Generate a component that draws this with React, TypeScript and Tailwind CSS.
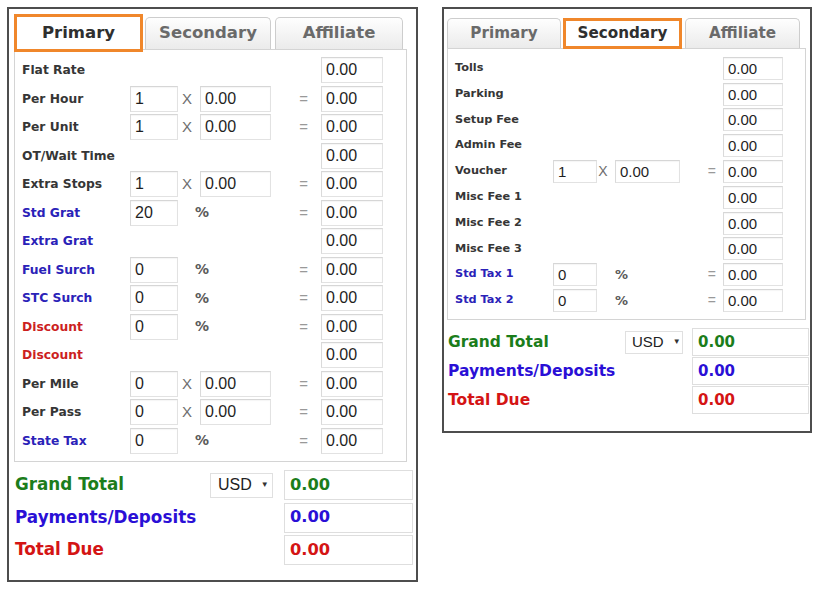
import React from "react";

type Kind = "single" | "mult" | "pct";
type Color = "dark" | "blue" | "red";
type Row = { label: string; kind: Kind; v?: string; color: Color };

const leftRows: Row[] = [
  { label: "Flat Rate", kind: "single", color: "dark" },
  { label: "Per Hour", kind: "mult", v: "1", color: "dark" },
  { label: "Per Unit", kind: "mult", v: "1", color: "dark" },
  { label: "OT/Wait Time", kind: "single", color: "dark" },
  { label: "Extra Stops", kind: "mult", v: "1", color: "dark" },
  { label: "Std Grat", kind: "pct", v: "20", color: "blue" },
  { label: "Extra Grat", kind: "single", color: "blue" },
  { label: "Fuel Surch", kind: "pct", v: "0", color: "blue" },
  { label: "STC Surch", kind: "pct", v: "0", color: "blue" },
  { label: "Discount", kind: "pct", v: "0", color: "red" },
  { label: "Discount", kind: "single", color: "red" },
  { label: "Per Mile", kind: "mult", v: "0", color: "dark" },
  { label: "Per Pass", kind: "mult", v: "0", color: "dark" },
  { label: "State Tax", kind: "pct", v: "0", color: "blue" },
];

const rightRows: Row[] = [
  { label: "Tolls", kind: "single", color: "dark" },
  { label: "Parking", kind: "single", color: "dark" },
  { label: "Setup Fee", kind: "single", color: "dark" },
  { label: "Admin Fee", kind: "single", color: "dark" },
  { label: "Voucher", kind: "mult", v: "1", color: "dark" },
  { label: "Misc Fee 1", kind: "single", color: "dark" },
  { label: "Misc Fee 2", kind: "single", color: "dark" },
  { label: "Misc Fee 3", kind: "single", color: "dark" },
  { label: "Std Tax 1", kind: "pct", v: "0", color: "blue" },
  { label: "Std Tax 2", kind: "pct", v: "0", color: "blue" },
];

const labelColor: Record<Color, string> = {
  dark: "text-[#363636]",
  blue: "text-[#2a22b8]",
  red: "text-[#cc1f1f]",
};

type Cfg = {
  panel: string;
  tabRow: string;
  tabs: { name: string; w: string; ml: string; active: boolean }[];
  activeTab: string;
  inactiveTab: string;
  tabText: string;
  box: string;
  grid: string;
  rowH: string;
  inH: string;
  label: string;
  inText: string;
  xCls: string;
  pctCls: string;
  eqCls: string;
  bottom: string;
  bGrid: string;
  bRowH: string;
  bLabel: string;
  usd: string;
  usdText: string;
  bValue: string;
};

const L: Cfg = {
  panel: "w-[411px] h-[575px] px-[5px]",
  tabRow: "mt-[5px] h-[35px]",
  tabs: [
    { name: "Primary", w: "w-[129px]", ml: "ml-0", active: true },
    { name: "Secondary", w: "w-[126px]", ml: "ml-[2px]", active: false },
    { name: "Affiliate", w: "w-[128px]", ml: "ml-[4px]", active: false },
  ],
  activeTab: "h-[38px]",
  inactiveTab: "mt-[3px] h-[32px]",
  tabText: "text-[16.5px]",
  box: "w-[393px] pt-[6px] pb-[6px] pl-[7px]",
  grid: "grid-cols-[108px_48px_22px_71px_50px_62px]",
  rowH: "h-[28.5px]",
  inH: "h-[26px]",
  label: "text-[12.3px]",
  inText: "text-[16px] pl-[4px]",
  xCls: "text-[15px] pr-[4px]",
  pctCls: "text-[14px] pl-[17px]",
  eqCls: "text-[15px] pr-[13px]",
  bottom: "mt-[8px] pl-[1px] gap-[2.5px]",
  bGrid: "grid-cols-[195px_63px_11px_129px]",
  bRowH: "h-[30px]",
  bLabel: "text-[16.8px]",
  usd: "h-[25px] pl-[7px]",
  usdText: "text-[16px]",
  bValue: "text-[16.3px] pl-[5px]",
};

const R: Cfg = {
  panel: "w-[370px] h-[426px] pl-[3px] pr-[4px]",
  tabRow: "mt-[9px] h-[30px]",
  tabs: [
    { name: "Primary", w: "w-[114px]", ml: "ml-0", active: false },
    { name: "Secondary", w: "w-[119px]", ml: "ml-[2px]", active: true },
    { name: "Affiliate", w: "w-[115px]", ml: "ml-[3px]", active: false },
  ],
  activeTab: "h-[31px]",
  inactiveTab: "h-[30px]",
  tabText: "text-[15.2px]",
  box: "w-[359px] pt-[6.5px] pb-[6px] pl-[7px]",
  grid: "grid-cols-[98px_44px_18px_65px_43px_60px]",
  rowH: "h-[25.8px]",
  inH: "h-[23px]",
  label: "text-[11.3px]",
  inText: "text-[15px] pl-[4px]",
  xCls: "text-[14px] pr-[6px]",
  pctCls: "text-[13px] pl-[18px]",
  eqCls: "text-[14px] pr-[7px]",
  bottom: "mt-[8px] pl-[1px] gap-[1px]",
  bGrid: "grid-cols-[177px_58px_9px_117px]",
  bRowH: "h-[28px]",
  bLabel: "text-[15.5px]",
  usd: "h-[23px] pl-[6px]",
  usdText: "text-[15px]",
  bValue: "text-[15px] pl-[5px]",
};

const dejavu = "font-['DejaVu_Sans',sans-serif]";
const arial = "font-['Liberation_Sans',Arial,sans-serif]";

function Field({ cfg, value, cls = "" }: { cfg: Cfg; value: string; cls?: string }) {
  return (
    <div
      className={`${cfg.inH} ${cfg.inText} ${arial} ${cls} flex items-center bg-white border border-[#e2e2e2] border-t-[#d6d6d6] border-l-[#dadada] shadow-[inset_0_1px_1px_rgba(0,0,0,0.04)] text-[#1f1f1f] leading-none`}
    >
      {value}
    </div>
  );
}

function Panel({ cfg, rows }: { cfg: Cfg; rows: Row[] }) {
  return (
    <div className={`${cfg.panel} border-2 border-[#4d4d4d] bg-white flex flex-col shrink-0`}>
      <div className={`${cfg.tabRow} flex items-start`}>
        {cfg.tabs.map((t) =>
          t.active ? (
            <div
              key={t.name}
              className={`${t.w} ${t.ml} ${cfg.activeTab} relative z-10 bg-white border-[3px] border-[#f0872b] flex items-center justify-center ${dejavu} font-bold ${cfg.tabText} text-[#2f2f2f]`}
            >
              {t.name}
            </div>
          ) : (
            <div
              key={t.name}
              className={`${t.w} ${t.ml} ${cfg.inactiveTab} rounded-t-[5px] border border-b-0 border-[#cdcdcd] bg-linear-to-b from-[#fefefe] to-[#ebebeb] flex items-center justify-center ${dejavu} font-bold ${cfg.tabText} text-[#6a6a6a]`}
            >
              {t.name}
            </div>
          )
        )}
      </div>
      <div className={`${cfg.box} border border-[#d4d4d4] bg-white flex flex-col`}>
        {rows.map((r, i) => (
          <div key={i} className={`grid ${cfg.grid} ${cfg.rowH} items-center`}>
            <div className={`${dejavu} font-bold ${cfg.label} ${labelColor[r.color]} whitespace-nowrap`}>{r.label}</div>
            {r.kind === "single" && (
              <>
                <div className="col-span-4" />
                <Field cfg={cfg} value="0.00" />
              </>
            )}
            {r.kind === "mult" && (
              <>
                <Field cfg={cfg} value={r.v ?? ""} />
                <div className={`${arial} ${cfg.xCls} text-center text-[#6e6e6e]`}>X</div>
                <Field cfg={cfg} value="0.00" />
                <div className={`${arial} ${cfg.eqCls} text-right text-[#999]`}>=</div>
                <Field cfg={cfg} value="0.00" />
              </>
            )}
            {r.kind === "pct" && (
              <>
                <Field cfg={cfg} value={r.v ?? ""} />
                <div className={`col-span-2 ${dejavu} font-bold ${cfg.pctCls} text-[#5a5a5a]`}>%</div>
                <div className={`${arial} ${cfg.eqCls} text-right text-[#999]`}>=</div>
                <Field cfg={cfg} value="0.00" />
              </>
            )}
          </div>
        ))}
      </div>
      <div className={`${cfg.bottom} flex flex-col`}>
        <div className={`grid ${cfg.bGrid} ${cfg.bRowH} items-center`}>
          <div className={`${dejavu} font-bold ${cfg.bLabel} text-[#1b7d1b] whitespace-nowrap`}>Grand Total</div>
          <div
            className={`${cfg.usd} ${arial} ${cfg.usdText} flex items-center gap-[9px] border border-[#e0e0e0] bg-white text-[#222]`}
          >
            <span>USD</span>
            <span className="text-[8px] text-[#333]">▼</span>
          </div>
          <div />
          <div
            className={`${cfg.bRowH} ${cfg.bValue} ${dejavu} font-bold flex items-center border border-[#dedede] bg-white text-[#1b7d1b]`}
          >
            0.00
          </div>
        </div>
        <div className={`grid ${cfg.bGrid} ${cfg.bRowH} items-center`}>
          <div className={`col-span-3 ${dejavu} font-bold ${cfg.bLabel} text-[#2a0fd6] whitespace-nowrap`}>
            Payments/Deposits
          </div>
          <div
            className={`${cfg.bRowH} ${cfg.bValue} ${dejavu} font-bold flex items-center border border-[#dedede] bg-white text-[#2a0fd6]`}
          >
            0.00
          </div>
        </div>
        <div className={`grid ${cfg.bGrid} ${cfg.bRowH} items-center`}>
          <div className={`col-span-3 ${dejavu} font-bold ${cfg.bLabel} text-[#d41414] whitespace-nowrap`}>Total Due</div>
          <div
            className={`${cfg.bRowH} ${cfg.bValue} ${dejavu} font-bold flex items-center border border-[#dedede] bg-white text-[#d41414]`}
          >
            0.00
          </div>
        </div>
      </div>
    </div>
  );
}

export default function App() {
  return (
    <div className="w-[824px] h-[601px] bg-white flex items-start gap-[24px] pl-[7px] pt-[7px]">
      <Panel cfg={L} rows={leftRows} />
      <Panel cfg={R} rows={rightRows} />
    </div>
  );
}
